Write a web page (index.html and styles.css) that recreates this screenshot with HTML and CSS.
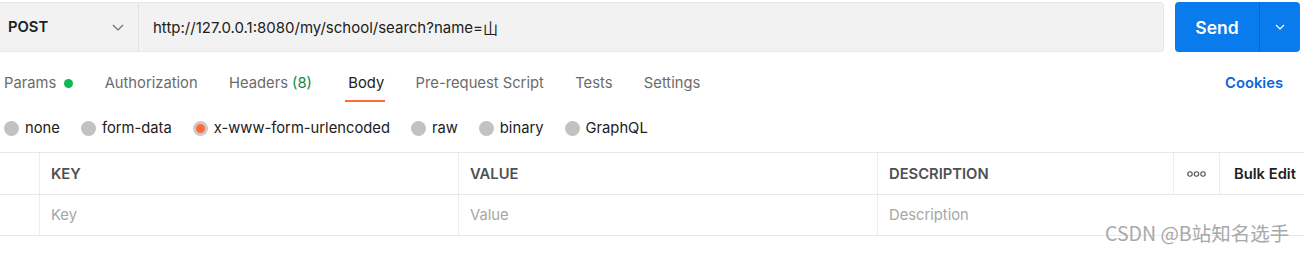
FILE: index.html
```html
<!DOCTYPE html>
<html lang="en">
<head>
<meta charset="utf-8">
<title>Request</title>
<link rel="stylesheet" href="styles.css">
</head>
<body>
<div class="page">
  <div class="topbar">
    <div class="request">
      <div class="method">
        <span class="method-name">POST</span>
        <svg class="chev" width="12" height="7" viewBox="0 0 12 7"><path d="M1 1l5 5 5-5" fill="none" stroke="#6b6b6b" stroke-width="1.2"/></svg>
      </div>
      <div class="url">http://127.0.0.1:8080/my/school/search?name=<span class="cjk">山</span></div>
    </div>
    <div class="send">
      <span class="send-main">Send</span>
      <span class="send-drop"><svg width="10" height="6" viewBox="0 0 10 6"><path d="M1 1l4 4 4-4" fill="none" stroke="#fff" stroke-width="1.2"/></svg></span>
    </div>
  </div>

  <div class="tabs">
    <div class="tab">Params <span class="dot"></span></div>
    <div class="tab">Authorization</div>
    <div class="tab">Headers <span class="count">(8)</span></div>
    <div class="tab active">Body</div>
    <div class="tab">Pre-request Script</div>
    <div class="tab">Tests</div>
    <div class="tab">Settings</div>
    <div class="tab cookies">Cookies</div>
  </div>

  <div class="radios">
    <label class="radio"><span class="circle"></span>none</label>
    <label class="radio"><span class="circle"></span>form-data</label>
    <label class="radio"><span class="circle checked"></span>x-www-form-urlencoded</label>
    <label class="radio"><span class="circle"></span>raw</label>
    <label class="radio"><span class="circle"></span>binary</label>
    <label class="radio"><span class="circle"></span>GraphQL</label>
  </div>

  <div class="table">
    <div class="cell head first"></div>
    <div class="cell head">KEY</div>
    <div class="cell head">VALUE</div>
    <div class="cell head">DESCRIPTION</div>
    <div class="cell head more"><svg width="19" height="6" viewBox="0 0 19 6"><circle cx="3" cy="3" r="2.2" fill="none" stroke="#505050" stroke-width="1.1"/><circle cx="9.5" cy="3" r="2.2" fill="none" stroke="#505050" stroke-width="1.1"/><circle cx="16" cy="3" r="2.2" fill="none" stroke="#505050" stroke-width="1.1"/></svg></div>
    <div class="cell head bulk">Bulk Edit</div>

    <div class="cell first"></div>
    <div class="cell ph">Key</div>
    <div class="cell ph">Value</div>
    <div class="cell ph span">Description</div>
  </div>

  <div class="watermark">CSDN @B站知名选手</div>
</div>
</body>
</html>
```

FILE: styles.css
```css
* { box-sizing: border-box; }
html, body { margin: 0; padding: 0; background: #fff; }
body {
  font-family: Inter, "Noto Sans", "Noto Sans CJK SC", sans-serif;
  color: #212121;
  width: 1304px;
  height: 253px;
  overflow: hidden;
}
.page { position: relative; width: 1304px; height: 253px; }

.topbar {
  display: flex;
  gap: 11px;
  padding-top: 2px;
  height: 51px;
}
.request {
  display: flex;
  width: 1164px;
  height: 50px;
  background: #f2f2f2;
  border: 1px solid #e8e8e8;
  border-left: none;
  border-radius: 0 4px 4px 0;
}
.method {
  width: 139px;
  display: flex;
  align-items: center;
  justify-content: space-between;
  padding: 0 14px 0 8px;
  border-right: 1px solid #e3e3e3;
}
.method-name { font-weight: 600; font-size: 14.75px; color: #212121; }
.chev { display: block; }
.url {
  display: flex;
  align-items: center;
  padding-left: 14px;
  font-size: 15px;
  color: #212121;
}
.cjk { font-family: "Noto Sans CJK SC", sans-serif; }

.send {
  display: flex;
  width: 125px;
  height: 50px;
  background: #097bed;
  border-radius: 4px;
  color: #fff;
}
.send-main {
  width: 85px;
  display: flex;
  align-items: center;
  justify-content: center;
  font-size: 17.5px;
  font-weight: 600;
  border-right: 1px solid #0a66c4;
}
.send-drop {
  flex: 1;
  display: flex;
  align-items: center;
  justify-content: center;
}
.send-drop svg { display: block; }

.tabs {
  display: flex;
  align-items: flex-start;
  height: 50px;
  padding: 22px 0 0 4px;
  gap: 31.4px;
}
.tab {
  font-size: 14.75px;
  color: #6b6b6b;
  display: flex;
  align-items: center;
  height: 20px;
  position: relative;
}
.dot {
  width: 9px;
  height: 9px;
  border-radius: 50%;
  background: #0cbb52;
  margin-left: 8px;
}
.count { color: #0a8a4b; margin-left: 4px; }
.tab.active { color: #212121; margin-left: 5px; }
.tab.active::after {
  content: "";
  position: absolute;
  left: -3px;
  right: -1px;
  top: 27px;
  height: 2px;
  background: #ff6c37;
}
.tab.cookies {
  margin-left: auto;
  margin-right: 21px;
  color: #0b65d9;
  font-weight: 600;
}

.radios {
  display: flex;
  align-items: center;
  gap: 21px;
  height: 51px;
  padding: 3px 0 0 4px;
}
.radio {
  display: flex;
  align-items: center;
  gap: 6px;
  font-size: 14.75px;
  color: #212121;
}
.circle {
  width: 15px;
  height: 15px;
  border-radius: 50%;
  background: #c2c2c2;
}
.circle.checked {
  background: #ff6c37;
  border: 3px solid #cacaca;
}

.table {
  display: grid;
  grid-template-columns: 39px 419px 419px 296px 46px 1fr;
  grid-template-rows: 42px 41px;
  border-top: 1px solid #e8e8e8;
}
.cell {
  border-bottom: 1px solid #e8e8e8;
  border-left: 1px solid #ededed;
  display: flex;
  align-items: center;
  padding-left: 11px;
  font-size: 14.75px;
}
.cell.first { border-left: none; }
.cell.head { font-weight: 600; color: #505050; }
.cell.more { justify-content: center; padding-left: 0; }
.cell.bulk { color: #212121; padding-left: 14px; }
.cell.ph { color: #a6a6a6; }
.cell.span { grid-column: 4 / 7; }

.watermark {
  position: absolute;
  left: 1105px;
  top: 220px;
  font-family: "Noto Sans CJK SC", "Noto Sans", sans-serif;
  font-size: 19.5px;
  color: #a8a8a8;
  line-height: 26px;
}
```
